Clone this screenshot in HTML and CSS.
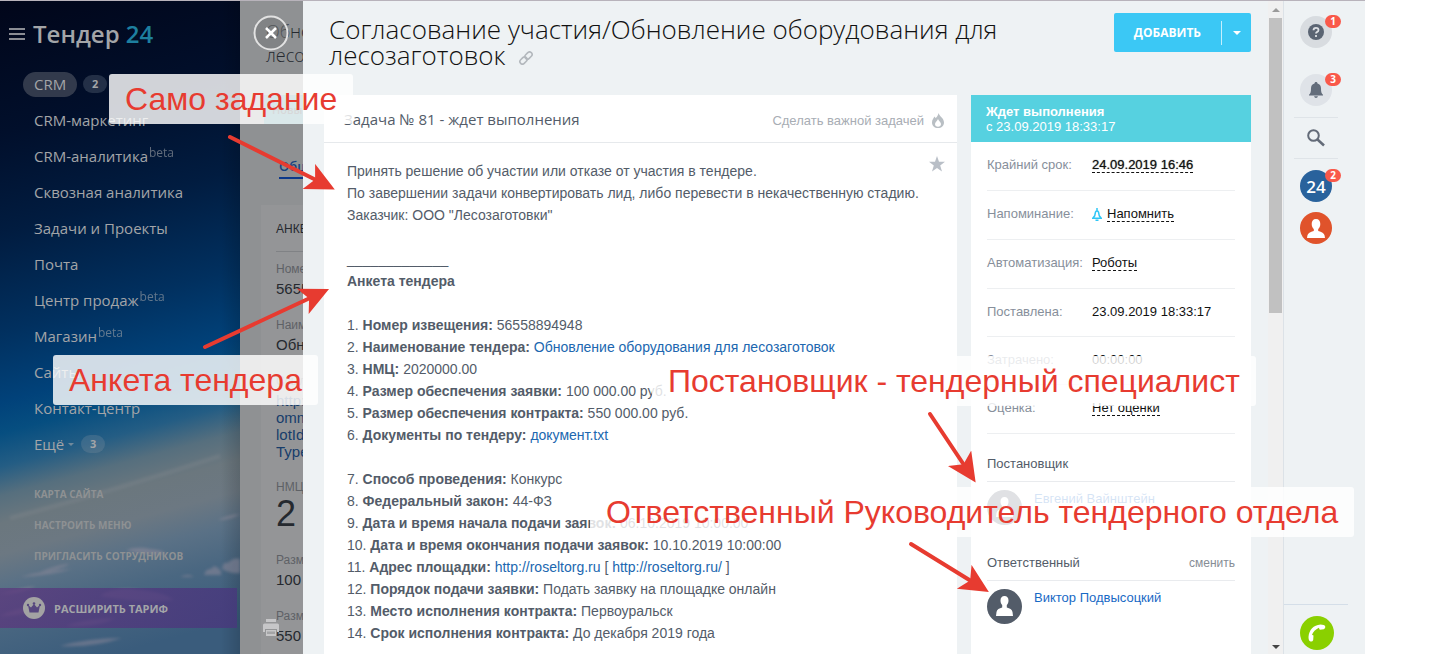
FILE: index.html
```html
<!DOCTYPE html>
<html lang="ru">
<head>
  <meta charset="UTF-8">
  <meta name="viewport" content="width=device-width, initial-scale=1.0">
  <title>Согласование участия/Обновление оборудования для лесозаготовок</title>
  <link rel="stylesheet" href="styles.css">
</head>
<body>
  <div class="app">
    <!-- Left menu -->
    <aside class="sidebar">
      <svg class="clouds" viewBox="0 0 240 240" preserveAspectRatio="none" aria-hidden="true">
        <defs>
          <filter id="puff" x="-10%" y="-10%" width="120%" height="120%"><feGaussianBlur stdDeviation="1.500" /></filter>
        </defs>
        <path d="M10 104Q110 78 220 42" fill="none" stroke="#98979a" stroke-width="4" opacity=".2" filter="url(#puff)" />
        <g fill="#a595a3" opacity=".4" filter="url(#puff)">
          <path d="M20 163q20-6 52-8q-20 6-52 8zM40 158q20-8 30-8q-8 5-30 8zM126 136q12-4 24-1q14 1 16 5q-20 3-40-4zM0 180q20-6 36-8q-14 8-36 8z" />
          <path d="M204 161q2-7 7-6q3-5 7-1q4 3 3 7zM222 155q1-8 6-6q5-6 12-4v14q-10 1-18-4zM180 163q8-4 14 0zM218 106q10-5 22-6q-10 6-22 6z" />
          <path d="M0 202q20-10 50-12q-20 12-50 12zM100 182q14-10 40-6q24 2 34 10q-30 4-74-4zM66 212q20-8 50-8q-20 10-50 8zM60 232q30-8 62-8q-30 10-62 8z" />
        </g>
      </svg>
      <div class="brand">
        <button class="burger" aria-label="Меню"><i></i><i></i><i></i></button>
        <span>Тендер <b>24</b></span>
      </div>
      <nav>
        <ul class="menu">
          <li><a href="#" class="active">CRM</a><span class="count">2</span></li>
          <li><a href="#">CRM-маркетинг</a></li>
          <li><a href="#">CRM-аналитика</a><sup>beta</sup></li>
          <li><a href="#">Сквозная аналитика</a></li>
          <li><a href="#">Задачи и Проекты</a></li>
          <li><a href="#">Почта</a></li>
          <li><a href="#">Центр продаж</a><sup>beta</sup></li>
          <li><a href="#">Магазин</a><sup>beta</sup></li>
          <li><a href="#">Сайты</a></li>
          <li><a href="#">Контакт-центр</a></li>
          <li><a href="#">Ещё</a><i class="more"></i><span class="count">3</span></li>
        </ul>
        <ul class="service">
          <li><a href="#">Карта сайта</a></li>
          <li><a href="#">Настроить меню</a></li>
          <li><a href="#">Пригласить сотрудников</a></li>
        </ul>
      </nav>
      <button class="upgrade">
        <svg width="22" height="22" viewBox="0 0 22 22" aria-hidden="true">
          <circle cx="11" cy="11" r="11" fill="#a3a3a3" />
          <path d="M5 8l3 2.500L11 7l3 3.500L17 8l-1.500 7.500h-9z" fill="#57477f" />
          <circle cx="5" cy="8" r="1.200" fill="#57477f" /><circle cx="11" cy="6.500" r="1.300" fill="#57477f" /><circle cx="17" cy="8" r="1.200" fill="#57477f" />
        </svg>
        Расширить тариф
      </button>
    </aside>

    <!-- Lead card under the slider -->
    <section class="lead">
      <div class="lead-title">Обно<br>лесо</div>
      <div class="lead-stage">Новы</div>
      <div class="lead-tabs"><a href="#">Общ</a></div>
      <div class="lead-card">
        <h3>АНКЕ</h3>
        <dl>
          <dt>Номе</dt><dd>5655</dd>
          <dt>Наим</dt><dd>Обн</dd>
          <dt>Ссыл</dt><dd class="url"><a href="#">http:<br>omm<br>lotId<br>Type</a></dd>
          <dt>НМЦ</dt><dd class="sum">2</dd>
          <dt>Разм</dt><dd>100</dd>
          <dt>Разм</dt><dd>550</dd>
        </dl>
      </div>
      <button class="close" aria-label="Закрыть">
        <svg width="36" height="36" viewBox="0 0 36 36"><circle cx="18" cy="18" r="16.500" fill="#77787a" fill-opacity=".55" stroke="#e2e2e2" stroke-width="2" /><path d="M13 13l10 10M23 13L13 23" stroke="#fff" stroke-width="2.500" /></svg>
      </button>
      <button class="print" aria-label="Печать">
        <svg width="16" height="17" viewBox="0 0 16 17"><path d="M3 0h10v3H3zM1.500 4.500h13Q16 4.500 16 6v7h-2v-3H2v3H0V6q0-1.500 1.500-1.500zM3 11h10v6H3z" fill="#c6c6c8" /><path d="M4 12.500h8v2.500H4z" fill="#a3a4a6" /></svg>
      </button>
    </section>

    <!-- Task slider -->
    <main class="slider">
      <div class="task">
        <header class="task-head">
          <h1>Согласование участия/Обновление оборудования для лесозаготовок
            <a href="#" class="link" aria-label="Ссылка"><svg width="16" height="14" viewBox="0 0 16 14" fill="none" stroke="#b3b8bd" stroke-width="1.600"><rect x="-4" y="-2.500" width="8" height="5" rx="2.500" transform="translate(10.500 4.500) rotate(-45)" /><rect x="-4" y="-2.500" width="8" height="5" rx="2.500" transform="translate(5.500 9.500) rotate(-45)" /></svg></a>
          </h1>
          <div class="add">
            <button class="add-main">Добавить</button>
            <button class="add-menu" aria-label="Ещё варианты"></button>
          </div>
        </header>
        <div class="columns">
          <article class="card">
            <div class="card-head">
              <span class="card-title">Задача № 81 - ждет выполнения</span>
              <button class="important">Сделать важной задачей
                <svg width="12" height="15" viewBox="0 0 12 15" aria-hidden="true"><path d="M6.500 0C7 3 12 5 12 9.500 12 13 9.500 15 6 15S0 13 0 9.500C0 6.500 1.500 5.500 2.500 3.500L3.500 5C5 4 6 2.500 6.500 0zM6 6C5.500 8 3 9 3 11c0 1.800 1.300 2.700 3 2.700S9 12.800 9 11C9 9 6.500 8 6 6z" fill="#b9bfc4" fill-rule="evenodd" /></svg>
              </button>
            </div>
            <div class="card-body">
              <div class="text">
                <p>Принять решение об участии или отказе от участия в тендере.<br>По завершении задачи конвертировать лид, либо перевести в некачественную стадию.<br>Заказчик: ООО "Лесозаготовки"</p>
                <p>_____________<br><b>Анкета тендера</b></p>
                <p>1. <b>Номер извещения:</b> 56558894948<br>
                2. <b>Наименование тендера:</b> <a href="#">Обновление оборудования для лесозаготовок</a><br>
                3. <b>НМЦ:</b> 2020000.00<br>
                4. <b>Размер обеспечения заявки:</b> 100 000.00 руб.<br>
                5. <b>Размер обеспечения контракта:</b> 550 000.00 руб.<br>
                6. <b>Документы по тендеру:</b> <a href="#">документ.txt</a></p>
                <p>7. <b>Способ проведения:</b> Конкурс<br>
                8. <b>Федеральный закон:</b> 44-ФЗ<br>
                9. <b>Дата и время начала подачи заявок:</b> 06.10.2019 10:00:00<br>
                10. <b>Дата и время окончания подачи заявок:</b> 10.10.2019 10:00:00<br>
                11. <b>Адрес площадки:</b> <a href="#">http://roseltorg.ru</a> [ <a href="#">http://roseltorg.ru/</a> ]<br>
                12. <b>Порядок подачи заявки:</b> Подать заявку на площадке онлайн<br>
                13. <b>Место исполнения контракта:</b> Первоуральск<br>
                14. <b>Срок исполнения контракта:</b> До декабря 2019 года</p>
              </div>
              <button class="star" aria-label="В избранное"><svg width="16" height="16" viewBox="0 0 16 16"><path d="M8 0l2 5.700 6 .1-4.800 3.700L13 15.500 8 12l-5 3.500 1.800-6L0 5.800l6-.1z" fill="#b9bfc7" /></svg></button>
            </div>
          </article>

          <aside class="info">
            <div class="status"><b>Ждет выполнения</b><br>с 23.09.2019 18:33:17</div>
            <div class="info-body">
              <div class="row"><span>Крайний срок:</span><button class="edit deadline">24.09.2019 16:46</button></div>
              <div class="row"><span>Напоминание:</span>
                <svg class="remind" width="10" height="13" viewBox="0 0 10 13" fill="none" stroke="#2fc6f6" stroke-width="1.500" aria-hidden="true"><path d="M5 0v2.500M.8 10.200h8.400L7.300 7.800 6.500 4Q6 3 5 3T3.500 4l-.8 3.800zM3.500 12.200h3" /></svg>
                <button class="edit">Напомнить</button></div>
              <div class="row"><span>Автоматизация:</span><button class="edit">Роботы</button></div>
              <div class="row"><span>Поставлена:</span>23.09.2019 18:33:17</div>
              <div class="row"><span>Затрачено:</span>00:00:00</div>
              <div class="row"><span>Оценка:</span><button class="edit">Нет оценки</button></div>
              <section class="person">
                <h2>Постановщик</h2>
                <div class="user"><svg width="35" height="35" viewBox="0 0 35 35" aria-hidden="true"><circle cx="17.500" cy="17.500" r="17.500" fill="#535c69" /><path d="M17.500 7c2.500 0 4 1.500 4 4.500 0 2-.8 3.500-1.700 4.500v2.500c3 1 5.200 1.800 5.700 4.500l.5 4H9l.5-4c.5-2.700 2.700-3.500 5.700-4.500V16c-.9-1-1.700-2.500-1.700-4.500 0-3 1.500-4.500 4-4.500z" fill="#fff" /></svg><a href="#">Евгений Вайнштейн</a></div>
              </section>
              <section class="person">
                <h2>Ответственный <button class="change">сменить</button></h2>
                <div class="user"><svg width="35" height="35" viewBox="0 0 35 35" aria-hidden="true"><circle cx="17.500" cy="17.500" r="17.500" fill="#535c69" /><path d="M17.500 7c2.500 0 4 1.500 4 4.500 0 2-.8 3.500-1.700 4.500v2.500c3 1 5.200 1.800 5.700 4.500l.5 4H9l.5-4c.5-2.700 2.700-3.500 5.700-4.500V16c-.9-1-1.700-2.500-1.700-4.500 0-3 1.500-4.500 4-4.500z" fill="#fff" /></svg><a href="#">Виктор Подвысоцкий</a></div>
              </section>
            </div>
          </aside>
        </div>
      </div>
      <div class="scrollbar"><i class="up"></i><i class="thumb"></i><i class="down"></i></div>
    </main>

    <!-- Right bar -->
    <aside class="rail">
      <div class="rail-inner">
        <button class="round help" aria-label="Помощь">
          <svg width="16" height="16" viewBox="0 0 16 16"><circle cx="8" cy="8" r="8" fill="#5b6573" /><path d="M5.500 6.300Q5.500 3.800 8 3.800t2.500 2.200Q10.500 7.300 8.900 8.100 8 8.600 8 9.500M8 11v2" fill="none" stroke="#dde0e4" stroke-width="1.800" /></svg>
          <span class="badge">1</span>
        </button>
        <button class="round bell" aria-label="Уведомления">
          <svg width="14" height="16" viewBox="0 0 14 16"><path d="M7 0c1 0 1.500.7 1.500 1.400C11 2 12 4 12 6.500c0 3.500.5 5 2 6.200v.8H0v-.8c1.500-1.200 2-2.700 2-6.200C2 4 3 2 5.500 1.400 5.500.7 6 0 7 0zM5 14.300h4Q8.500 16 7 16t-2-1.700z" fill="#636d7b" /></svg>
          <span class="badge">3</span>
        </button>
        <button class="search" aria-label="Поиск">
          <svg width="18" height="18" viewBox="0 0 18 18" fill="none" stroke="#636b78"><circle cx="6.500" cy="6.500" r="5.300" stroke-width="2" /><path d="M10.500 10.500l6.500 6" stroke-width="2.500" /></svg>
        </button>
        <button class="round b24">24<span class="badge">2</span></button>
        <button class="round me" aria-label="Профиль">
          <svg width="18" height="19" viewBox="0 0 18 19"><path d="M9 0c3 0 4.300 2 4.300 5 0 2.500-1 4-2.100 5v2c3.500 1 6 2 6.400 4.500L18 19H0l.4-2.500C.8 14 3.300 13 6.800 12v-2c-1.100-1-2.100-2.500-2.100-5 0-3 1.300-5 4.300-5z" fill="#fff" /></svg>
        </button>
        <div class="call">
          <button class="phone" aria-label="Позвонить">
            <svg width="18" height="18" viewBox="0 0 18 18"><path d="M5.500 11.500l-.3 4.500Q4.500 18 2.500 17.500 .5 17 .5 13C1 6 5.500 1 12.500.5q4 0 4.700 1.800.6 2.200-1.400 3l-4 .4-1-1.900C7.500 5.500 5 8 4 10.800z" fill="#fff" /></svg>
          </button>
        </div>
      </div>
    </aside>
  </div>

  <!-- Callouts -->
  <div class="note note-task">Само задание</div>
  <div class="note note-form">Анкета тендера</div>
  <div class="note note-author">Постановщик - тендерный специалист</div>
  <div class="note note-owner">Ответственный Руководитель тендерного отдела</div>
  <svg class="arrows" width="1000" height="654" aria-hidden="true">
    <defs>
      <marker id="head" markerUnits="userSpaceOnUse" markerWidth="30" markerHeight="30" refX="8" refY="14" orient="auto">
        <path d="M0 0L29 14 0 28 7 14z" fill="#e73b30" />
      </marker>
    </defs>
    <g stroke="#e73b30" stroke-width="4" stroke-linecap="round">
      <path d="M230 137L316 180" marker-end="url(#head)" />
      <path d="M205 347L310 298" marker-end="url(#head)" />
      <path d="M930 414L964 465" marker-end="url(#head)" />
      <path d="M911 544L971 581" marker-end="url(#head)" />
    </g>
  </svg>
</body>
</html>
```
FILE: styles.css
```css
* {
  box-sizing: border-box;
}

body {
  margin: 0;
  padding-right: 69px;
  background: #fff;
  font-family: "Liberation Sans", Arial, sans-serif;
  font-size: 13px;
  overflow: hidden;
}

a {
  color: #2067b0;
  text-decoration: none;
}

button {
  padding: 0;
  border: none;
  background: none;
  font: inherit;
  color: inherit;
  cursor: pointer;
}

ul, dl, dd, h1, h2, h3, p {
  margin: 0;
  padding: 0;
}

ul {
  list-style: none;
}

svg {
  display: block;
}

.app {
  display: flex;
  height: 100vh;
  border-top: 1px solid #b8b3bb;
}

/* left menu */
.sidebar {
  position: relative;
  flex: none;
  width: 240px;
  overflow: hidden;
  font-family: "Open Sans", sans-serif;
  color: #a3a5a8;
  background:
    linear-gradient(90deg, transparent 92%, rgba(0, 0, 0, .15)),
    linear-gradient(165deg, #01061a 0, #010f2b 128px, #011c40 224px, #01305f 320px, #01427a 388px, #064e80 418px, #245d84 450px, #566f7e 478px, #6b777e 505px, #6c7882 535px, #5a7186 565px, #4a6781 600px, #3a5c7c 660px);
}

.clouds {
  position: absolute;
  left: 0;
  bottom: 0;
  width: 100%;
  height: 240px;
}

.sidebar a {
  color: inherit;
}

.brand {
  display: flex;
  align-items: center;
  gap: 8px;
  height: 65px;
  padding-left: 9px;
  font-size: 24px;
  font-weight: 600;
}

.brand b {
  color: #1d7f9f;
  font-weight: 600;
}

.burger {
  display: grid;
  gap: 3px;
  width: 16px;
}

.burger i {
  height: 2px;
  background: #8b8d94;
}

.menu {
  position: relative;
  font-size: 15px;
}

.menu li {
  display: flex;
  align-items: center;
  height: 36px;
  padding-left: 34px;
}

.menu .active {
  margin-left: -11px;
  padding: 0 11px;
  border-radius: 13px;
  background: #323a4c;
  font-weight: 500;
  line-height: 25px;
}

.menu sup {
  align-self: flex-start;
  margin-top: 6px;
  padding-left: 1px;
  font-size: 12px;
  line-height: 18px;
  opacity: .6;
}

.count {
  width: 24px;
  margin-left: 6px;
  border-radius: 9px;
  background: rgba(140, 150, 165, .25);
  font-size: 11px;
  font-weight: 700;
  line-height: 18px;
  text-align: center;
}

.more {
  margin: 0 1px 0 4px;
  border: 3px solid transparent;
  border-top-color: #70899c;
  border-bottom: none;
}

.service {
  position: relative;
  padding: 17px 0 0 34px;
  font-size: 10px;
  font-weight: 700;
  line-height: 31px;
  text-transform: uppercase;
  color: #8e9193;
}

.upgrade {
  position: relative;
  display: flex;
  align-items: center;
  gap: 9px;
  width: calc(100% - 3px);
  height: 40px;
  margin-top: 16px;
  padding-left: 23px;
  background: linear-gradient(90deg, rgba(91, 55, 125, .75), rgba(72, 55, 125, .8));
  font-size: 11px;
  font-weight: 700;
  text-transform: uppercase;
}

/* lead card */
.lead {
  position: relative;
  flex: none;
  width: 63px;
  overflow: hidden;
  background: #8f9193;
  white-space: nowrap;
  color: #25292f;
}

.close {
  position: absolute;
  top: 14px;
  left: 13px;
}

.lead-title {
  height: 94px;
  padding: 18px 0 0 26px;
  font-family: "Open Sans", sans-serif;
  font-size: 18px;
  font-weight: 300;
  line-height: 24px;
}

.lead-stage {
  margin-left: 24px;
  padding-left: 8px;
  background: #348089;
  font-family: "Open Sans", sans-serif;
  font-size: 11px;
  font-weight: 600;
  line-height: 29px;
}

.lead-tabs {
  padding: 31px 0 26px 39px;
  font-family: "Open Sans", sans-serif;
  font-weight: 600;
  line-height: 22px;
}

.lead-tabs a {
  display: block;
  border-bottom: 2px solid #0c388a;
  color: #16417f;
}

.lead-card {
  margin-left: 21px;
  padding-left: 15px;
  background: #949597;
}

.lead-card h3 {
  padding: 16px 0 14px;
  border-bottom: 1px solid #808285;
  font-size: 12px;
  font-weight: 400;
  line-height: 16px;
}

.lead-card dt {
  padding-top: 9px;
  color: #5e6166;
  font-size: 12px;
  line-height: 16px;
}

.lead-card dd {
  padding: 2px 0 9px;
  font-size: 15px;
  line-height: 20px;
}

.lead-card dd.url {
  padding: 3px 0 10px;
  line-height: 17px;
}

.lead-card dd.url a {
  color: #173d6b;
}

.lead-card dd.sum {
  padding: 0 0 10px;
  font-size: 36px;
  line-height: 38px;
}

.print {
  position: absolute;
  bottom: 18px;
  left: 23px;
}

/* task slider */
.slider {
  display: flex;
  flex: 1;
  min-width: 0;
  background: #eef2f4;
}

.task {
  flex: 1;
  min-width: 0;
  padding: 0 17px 0 21px;
  overflow: hidden;
}

.task-head {
  display: flex;
  justify-content: space-between;
  align-items: flex-start;
  height: 94px;
  padding: 12px 0 0 5px;
}

.task-head h1 {
  padding-top: 3px;
  font-family: "Open Sans", sans-serif;
  font-size: 26px;
  font-weight: 300;
  line-height: 26px;
  color: #111;
}

.link {
  display: inline-block;
  margin-left: 6px;
}

.add {
  display: flex;
  flex: none;
  align-items: center;
  height: 39px;
  border-radius: 2px;
  background: #3bc8f5;
  color: #fff;
}

.add-main {
  padding: 0 20px;
  font-family: "Open Sans", sans-serif;
  font-size: 12px;
  font-weight: 700;
  line-height: 39px;
  text-transform: uppercase;
}

.add-menu {
  display: flex;
  align-items: center;
  justify-content: center;
  width: 30px;
  height: 24px;
  border-left: 1px solid #c4effd;
}

.add-menu::before {
  content: "";
  border: 4px solid transparent;
  border-top-color: #fff;
  border-bottom: none;
}

.columns {
  display: flex;
  gap: 14px;
}

.card {
  flex: 1;
  min-width: 0;
  background: #fff;
  color: #535c69;
}

.card-head {
  display: flex;
  align-items: center;
  justify-content: space-between;
  height: 48px;
  padding: 0 13px 0 20px;
  border-bottom: 1px solid #e6e9ec;
}

.card-title {
  font-family: "Open Sans", sans-serif;
  font-size: 15px;
}

.important {
  display: flex;
  align-items: center;
  gap: 8px;
  padding-top: 4px;
  color: #a8adb4;
}

.card-body {
  display: flex;
  align-items: flex-start;
  padding: 13px 12px 0 23px;
}

.text {
  flex: 1;
  padding-top: 4px;
  font-size: 14px;
  line-height: 22px;
}

.text p {
  margin-bottom: 22px;
}

.info {
  flex: none;
  width: 280px;
  background: #fff;
}

.status {
  padding: 9px 15px 8px;
  background: #56d1e0;
  color: #fff;
  line-height: 15px;
}

.info-body {
  padding: 0 16px;
}

.row {
  display: flex;
  padding: 15px 0 17px;
  border-bottom: 1px solid #edeff1;
  line-height: 15px;
  color: #111;
}

.row span {
  width: 105px;
  color: #878f9b;
}

.edit {
  border-bottom: 1px dashed #111;
  line-height: 15px;
}

.deadline {
  text-shadow: 0 0 1px #555;
}

.remind {
  margin: 2px 5px 0 0;
}

.person {
  padding: 22px 0 8px;
}

.person h2 {
  display: flex;
  justify-content: space-between;
  padding-bottom: 9px;
  border-bottom: 1px solid #e9ebee;
  font-size: 13px;
  font-weight: 400;
  line-height: 16px;
  color: #535c69;
}

.change {
  font-size: 12px;
  line-height: 16px;
  color: #868d95;
}

.user {
  display: flex;
  gap: 12px;
  padding-top: 8px;
  line-height: 18px;
}

.user a {
  color: #1869c5;
}

.scrollbar {
  display: flex;
  flex-direction: column;
  align-items: center;
  width: 15px;
  padding: 7px 0 5px;
  background: #f0f0f0;
}

.scrollbar i {
  border: 4px solid transparent;
}

.scrollbar .up {
  border-top: none;
  border-bottom-color: #9a9a9a;
}

.scrollbar .down {
  margin-top: auto;
  border-top-color: #444;
  border-bottom: none;
}

.scrollbar .thumb {
  width: 13px;
  height: 46%;
  margin-top: 6px;
  border: none;
  background: #c1c1c1;
}

/* right bar */
.rail {
  flex: none;
  width: 82px;
  border-left: 1px solid #dce2e7;
  background: #eef2f4;
}

.rail-inner {
  display: flex;
  flex-direction: column;
  align-items: center;
  width: 64px;
  height: 100%;
  padding-top: 15px;
}

.round {
  position: relative;
  display: flex;
  flex: none;
  align-items: center;
  justify-content: center;
  width: 32px;
  height: 32px;
  border-radius: 50%;
}

.badge {
  position: absolute;
  top: -1px;
  right: -9px;
  width: 16px;
  border-radius: 7px;
  background: #f9594a;
  color: #fff;
  font-family: "Open Sans", sans-serif;
  font-size: 10px;
  font-weight: 700;
  line-height: 13px;
  text-align: center;
}

.help {
  background: #d8dce0;
}

.bell {
  margin-top: 26px;
  background: #dfe3e8;
}

.search {
  display: flex;
  align-items: center;
  justify-content: center;
  width: 44px;
  height: 42px;
  margin: 11px 0;
  border: solid #dfe4e8;
  border-width: 1px 0;
}

.b24 {
  background: #29629c;
  color: #fff;
  font-family: "Open Sans", sans-serif;
  font-size: 17px;
  font-weight: 600;
}

.me {
  margin-top: 10px;
  background: #e0532b;
}

.call {
  width: 100%;
  margin-top: auto;
  padding: 11px 0 4px 16px;
  border-top: 1px solid #d4dee8;
}

.phone {
  display: flex;
  align-items: center;
  justify-content: center;
  width: 34px;
  height: 34px;
  border-radius: 50%;
  background: #8ad000;
}

/* callouts */
.note {
  position: absolute;
  padding: 0 16px;
  border-radius: 3px;
  background: rgba(255, 255, 255, .82);
  color: #e73b30;
  font-size: 32px;
  line-height: 50px;
  white-space: nowrap;
}

.note-task {
  top: 74px;
  left: 109px;
}

.note-form {
  top: 355px;
  left: 53px;
}

.note-author {
  top: 356px;
  left: 652px;
}

.note-owner {
  top: 487px;
  left: 590px;
}

.arrows {
  position: absolute;
  top: 0;
  left: 0;
  pointer-events: none;
}
```
